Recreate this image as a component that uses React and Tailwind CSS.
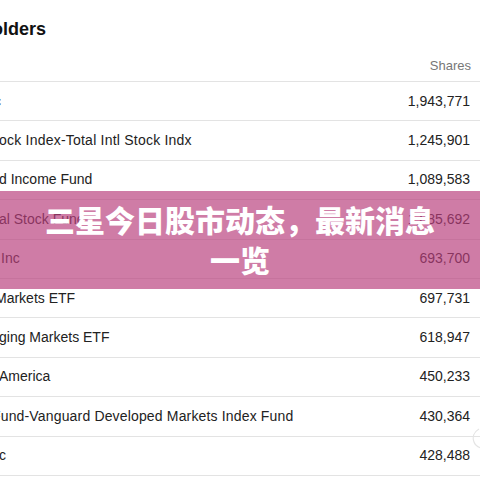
import React from "react";

const rows = [
  { name: "c", off: "-ml-[6px]", shares: "1,943,771" },
  { name: "ock Index-Total Intl Stock Indx", off: "-ml-[1px] tracking-[0.22px]", shares: "1,245,901" },
  { name: "d Income Fund", off: "-ml-[1px]", shares: "1,089,583" },
  { name: "al Stock Fund", off: "-ml-[1px]", shares: "1,085,692" },
  { name: "Inc", off: "ml-[1px]", shares: "693,700" },
  { name: "Markets ETF", off: "-ml-[5px]", shares: "697,731" },
  { name: "ging Markets ETF", off: "-ml-[1px]", shares: "618,947" },
  { name: "America", off: "-ml-[1px]", shares: "450,233" },
  { name: "Fund-Vanguard Developed Markets Index Fund", off: "-ml-[8px] tracking-[0.16px]", shares: "430,364" },
  { name: "c", off: "-ml-[1px]", shares: "428,488" },
];

export default function App() {
  return (
    <div
      className="relative w-[480px] h-[480px] overflow-hidden bg-white text-[#222]"
      style={{ fontFamily: '"Liberation Sans", Arial, sans-serif' }}
    >
      <div className="border-b border-[#e3e3e3] h-[82px]">
        <div className="pt-[18px] h-[40px]">
          <div className="-ml-[21px] text-[18px] leading-[22px] font-bold text-[#111] whitespace-nowrap">
            Holders
          </div>
        </div>
        <div className="mt-[18px] flex justify-end pr-[9px] text-[13px] leading-[16px] text-[#777]">
          Shares
        </div>
      </div>
      {rows.map((r, i) => (
        <div
          key={i}
          className="h-[39.4px] border-b border-[#e3e3e3] flex items-center justify-between pr-[10px] text-[14px]"
        >
          <span className={`${r.off} whitespace-nowrap`}>{r.name}</span>
          <span className="whitespace-nowrap">{r.shares}</span>
        </div>
      ))}

      <svg
        className="absolute left-[470px] top-[428px]"
        width="12"
        height="22"
        viewBox="0 0 12 22"
        fill="none"
      >
        <path d="M9 1 C4 4 2 9 4 14 C5 17 8 19 11 20" stroke="#e4e4e4" strokeWidth="1.2" />
      </svg>

      <div className="absolute left-0 top-[191px] w-[480px] h-[98px] bg-[rgba(184,62,124,0.68)] flex items-center justify-center px-[40px]">
        <div
          className="text-white text-[30px] leading-[40px] font-black text-center -mt-[3px]"
          style={{ fontFamily: '"Noto Sans CJK SC", "Noto Sans", sans-serif' }}
        >
          三星今日股市动态，最新消息一览
        </div>
      </div>
    </div>
  );
}
